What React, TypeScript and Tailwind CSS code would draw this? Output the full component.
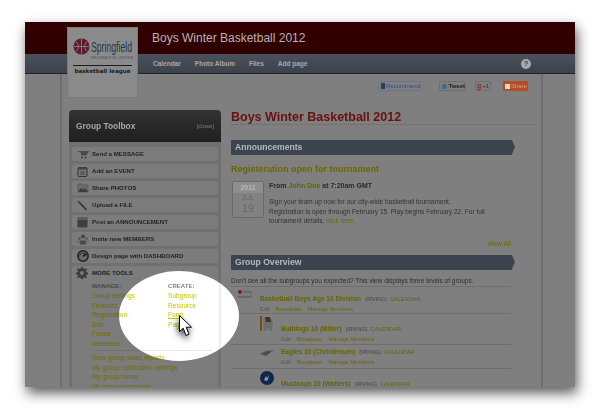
const font = "font-['Liberation_Sans',Arial,sans-serif]";

const toolRows = [
  { label: "Send a ", strong: "MESSAGE", icon: "cart" },
  { label: "Add an ", strong: "EVENT", icon: "calendar" },
  { label: "Share ", strong: "PHOTOS", icon: "folder" },
  { label: "Upload a ", strong: "FILE", icon: "pen" },
  { label: "Post an ", strong: "ANNOUNCEMENT", icon: "book" },
  { label: "Invite new ", strong: "MEMBERS", icon: "people" },
  { label: "Design page with ", strong: "DASHBOARD", icon: "gauge" },
];

const manage = ["Group settings", "Features", "Registration", "Bills", "Forms", "Members"];
const create = ["Subgroup", "Resource", "Form", "Page"];
const extra = ["View group sales reports", "My group notification settings", "My group forms", "My group messages"];

function ToolIcon({ name }: { name: string }) {
  if (name === "cart")
    return (
      <svg width="12" height="10" viewBox="0 0 12 10">
        <path d="M0 2h12L9.5 6.5h-5L3.5 3.5z" fill="#4a4a4a" />
        <circle cx="5" cy="8.5" r="1" fill="#3a3a3a" />
        <circle cx="8.5" cy="8.5" r="1" fill="#3a3a3a" />
      </svg>
    );
  if (name === "calendar")
    return (
      <svg width="11" height="11" viewBox="0 0 11 11">
        <rect x="1" y="1.5" width="9" height="9" rx="1" fill="#777" stroke="#333" />
        <rect x="1" y="1.5" width="9" height="2" fill="#444" />
        <path d="M3 6h5M3 8h5" stroke="#444" strokeWidth="1" />
      </svg>
    );
  if (name === "folder")
    return (
      <svg width="12" height="10" viewBox="0 0 12 10">
        <path d="M1 1h4l1 1h5v7H1z" fill="#6b6b6b" stroke="#4a4a4a" strokeWidth="0.6" />
        <path d="M1 9l3-4 2 2 2-2 3 4z" fill="#3b3b3b" />
      </svg>
    );
  if (name === "pen")
    return (
      <svg width="11" height="11" viewBox="0 0 11 11">
        <path d="M1 1l8.5 9" stroke="#333" strokeWidth="1.8" />
        <path d="M1 1l3 1" stroke="#666" strokeWidth="1" />
      </svg>
    );
  if (name === "book")
    return (
      <svg width="11" height="11" viewBox="0 0 11 11">
        <rect x="0.5" y="0.5" width="10" height="10" rx="1" fill="#3f3f3f" />
        <rect x="0.5" y="0.5" width="10" height="2.5" fill="#5c5c5c" />
      </svg>
    );
  if (name === "people")
    return (
      <svg width="12" height="11" viewBox="0 0 12 11">
        <circle cx="6" cy="2.5" r="2" fill="#444" />
        <circle cx="2.5" cy="4.5" r="1.5" fill="#5a5a5a" />
        <circle cx="9.5" cy="4.5" r="1.5" fill="#5a5a5a" />
        <path d="M3 10.5V6.5h6v4z" fill="#4a4a4a" />
        <path d="M0.5 9V6.5h2V9zM9.5 9V6.5h2V9z" fill="#666" />
      </svg>
    );
  return (
    <svg width="12" height="12" viewBox="0 0 12 12">
      <circle cx="6" cy="6" r="5.2" fill="#6a6a6a" stroke="#1c1c1c" strokeWidth="1.4" />
      <path d="M6 6.5L9 3.5" stroke="#111" strokeWidth="1.2" />
      <path d="M2.5 6.5a3.5 3.5 0 0 1 7 0" fill="none" stroke="#222" strokeWidth="0.8" />
    </svg>
  );
}

function Gear() {
  return (
    <svg width="12" height="12" viewBox="0 0 12 12">
      <path
        d="M5 0h2l.3 1.6 1.2.5L10 1.2 11 2.8 9.9 4l.4 1.2L12 5.5v2l-1.7.3-.4 1.2L11 10l-1.2 1.2-1.3-1-1.2.5L7 12H5l-.3-1.3-1.2-.5-1.3 1L1 10l1.1-1-.4-1.2L0 7.5v-2l1.7-.3L2.1 4 1 2.8 2 1.2l1.5.9 1.2-.5z"
        fill="#3c3c3c"
      />
      <circle cx="6" cy="6" r="2" fill="#777" />
    </svg>
  );
}

// same block is drawn twice: dimmed in the panel, bright inside the spotlight
function MoreTools({ bright }: { bright?: boolean }) {
  const link = bright ? "text-[#c4c400]" : "text-[#6e6e00]";
  const head = bright ? "text-[#808080]" : "text-[#454545]";
  const rule = bright ? "border-[#e6e6e6]" : "border-[#707070]";
  return (
    <div className="w-[146px] pl-[20px] pr-[5px]">
      <div className="h-[13px] text-[6.1px] leading-[13px] font-bold text-[#222]">MORE TOOLS</div>
      <div className="flex">
        <div className="w-[76px]">
          <div className={`h-[12px] pt-[1px] text-[6.1px] leading-[12px] font-bold ${head}`}>MANAGE:</div>
          {manage.map((m) => (
            <div key={m} className={`h-[9.6px] text-[6.6px] leading-[9.6px] ${link}`}>
              {m}
            </div>
          ))}
        </div>
        <div>
          <div className={`h-[12px] pt-[1px] text-[6.1px] leading-[12px] font-bold ${head}`}>CREATE:</div>
          {create.map((c) => (
            <div key={c} className={`h-[9.6px] text-[6.6px] leading-[9.6px] ${link}`}>
              <span className={c === "Form" ? "underline" : ""}>{c}</span>
            </div>
          ))}
        </div>
      </div>
      <div className={`mt-[1.5px] border-t ${rule} pt-[2px]`}>
        {extra.map((e) => (
          <div key={e} className={`h-[9.6px] text-[6.6px] leading-[9.6px] ${link}`}>
            {e}
          </div>
        ))}
      </div>
    </div>
  );
}

function Ribbon({ title }: { title: string }) {
  return (
    <div className="flex h-[15px] w-[284px]">
      <div className="flex-1 rounded-l-[1px] bg-[#3c4450] pl-[4px] text-[8.6px] leading-[15px] font-bold text-[#b4b8bc]">
        {title}
      </div>
      <div className="h-0 w-0 border-y-[7.5px] border-l-[3px] border-y-transparent border-l-[#3c4450]" />
    </div>
  );
}

function GroupRow({
  name,
  image,
  child,
  className,
}: {
  name: string;
  image: React.ReactNode;
  child?: boolean;
  className: string;
}) {
  return (
    <div className={`flex w-[280px] border-b border-[#6e6e6e] ${className}`}>
      <div className={`shrink-0 ${child ? "w-[50px] pl-[29px]" : "w-[29px] pl-[7px]"}`}>{image}</div>
      <div>
        <div className="flex h-[10px] items-center gap-[3px] whitespace-nowrap leading-[10px]">
          <span className="text-[6.55px] font-bold text-[#646400]">{name}</span>
          <span className="ml-[1px] text-[5.4px] text-[#444]">(IRVING)</span>
          <span className="text-[5.6px] text-[#646400]">CALENDAR</span>
        </div>
        <div className="flex h-[10px] gap-[6px] whitespace-nowrap text-[5.7px] leading-[10px] text-[#666610]">
          <span className="text-[#555]">Edit</span>
          <span>Broadcast</span>
          <span>Manage Members</span>
        </div>
      </div>
    </div>
  );
}

export default function App() {
  return (
    <div className={`${font} h-[420px] w-[600px] overflow-hidden bg-white pt-[22px] pl-[25px]`}>
      <div className="relative h-[365px] w-[550px] overflow-hidden bg-[#7f7f7f] shadow-[2px_6px_12px_rgba(0,0,0,0.65)] blur-[0.5px]">
        <div className="flex h-[32px] items-center bg-[#300000] pl-[127px] text-[12px] text-[#b9b4b4]">
          Boys Winter Basketball 2012
        </div>
        <div className="flex h-[20px] items-center gap-[14px] border-b border-[#222] bg-gradient-to-b from-[#4b525d] to-[#3b424c] pl-[128px] text-[6.5px] font-bold text-[#a4a8ac]">
          <span>Calendar</span>
          <span>Photo Album</span>
          <span>Files</span>
          <span>Add page</span>
          <span className="ml-auto mr-[44px] flex h-[10px] w-[10px] items-center justify-center rounded-full bg-[#aaa] text-[8px] text-[#3b424c]">
            ?
          </span>
        </div>

        <div className="flex h-[313px] overflow-hidden">
          <div className="w-[37px] shrink-0 border-r-2 border-[#6e6e6e]" />
          <div className="w-[481px] shrink-0 border-r-2 border-[#6e6e6e]">
            {/* share buttons */}
            <div className="mt-[7px] flex h-[10px] items-center pl-[316px] text-[6px]">
              <div className="flex h-[10px] w-[43px] items-center gap-[1px] rounded-[2px] border border-[#6f7480] bg-[#7c8088] pl-[2px] text-[#3b4a70]">
                <span className="h-[6px] w-[6px] bg-[#2b3a60]" />
                Recommend
              </div>
              <div className="ml-[18px] flex h-[10px] w-[27px] items-center gap-[1px] rounded-[2px] border border-[#6f6f6f] bg-[#7e7e7e] pl-[2px] font-bold text-[#222]">
                <span className="h-[5px] w-[6px] rounded-full bg-[#2d6d96]" />
                Tweet
              </div>
              <div className="ml-[9px] flex h-[10px] w-[16px] items-center gap-[1px] rounded-[2px] border border-[#6f6f6f] bg-[#7e7e7e] pl-[1px] font-bold text-[#444]">
                <span className="text-[7px] text-[#8f2a1c]">g</span>+1
              </div>
              <div className="ml-[12px] flex h-[10px] w-[25px] items-center gap-[1px] rounded-[1px] bg-[#b44c26] pl-[2px] text-[#d9a08a]">
                <span className="h-[5px] w-[5px] bg-[#ddb]" />
                Share
              </div>
            </div>

            <div className="mt-[19px] flex pl-[7px]">
              {/* toolbox */}
              <div className="w-[152px] shrink-0">
                <div className="flex h-[32px] items-center justify-between rounded-t-[4px] bg-gradient-to-b from-[#333] to-[#1f1f1f] px-[7px] text-[#a8a8a8]">
                  <span className="text-[8.4px] font-bold">Group Toolbox</span>
                  <span className="text-[6px] text-[#808080]">[close]</span>
                </div>
                <div className="flex h-[300px] flex-col gap-[3px] bg-[#707070] px-[3px] pt-[5px]">
                  {toolRows.map((r) => (
                    <div key={r.strong} className="flex h-[14px] items-center rounded-[2px] bg-[#7c7c7c] text-[6.1px] font-bold text-[#222]">
                      <div className="flex w-[20px] justify-center pl-[1px]">
                        <ToolIcon name={r.icon} />
                      </div>
                      <span className="whitespace-nowrap text-[#222]">
                        {r.label}
                        {r.strong}
                      </span>
                    </div>
                  ))}
                  <div className="relative rounded-[2px] bg-[#7c7c7c] pb-[10px]">
                    <div className="absolute top-[1px] left-[4px]">
                      <Gear />
                    </div>
                    <MoreTools />
                  </div>
                </div>
              </div>

              {/* main column */}
              <div className="ml-[10px] w-[306px]">
                <div className="h-[15px] border-b border-dotted border-[#666] text-[12.5px] leading-[14px] font-bold text-[#6a1010]">
                  Boys Winter Basketball 2012
                </div>
                <div className="mt-[15px]">
                  <Ribbon title="Announcements" />
                </div>
                <div className="mt-[8px] h-[12px] text-[9px] leading-[12px] font-bold text-[#686800]">
                  Registeration open for tournament
                </div>
                <div className="mt-[6px] flex h-[37px] pl-[1px]">
                  <div className="w-[32px] shrink-0 overflow-hidden rounded-[2px] border border-[#6a6a6a] bg-[#828282] text-center">
                    <div className="h-[11px] bg-[#8e8e8e] text-[7px] leading-[11px] font-bold text-[#b8b8b8]">2011</div>
                    <div className="mt-[1px] text-[7px] leading-[8px] text-[#666]">JUL</div>
                    <div className="text-[11px] leading-[13px] text-[#666]">19</div>
                  </div>
                  <div className="ml-[5px] text-[#333]">
                    <div className="h-[10px] text-[7px] leading-[10px] font-bold text-[#2a2a2a]">
                      From <span className="text-[#646400]">John Doe</span> at 7:20am GMT
                    </div>
                    <div className="mt-[6px] text-[6.5px] leading-[9.7px] whitespace-nowrap">
                      Sign your team up now for our city-wide basketball tournament.
                      <br />
                      Registration is open through February 15. Play begins February 22. For full
                      <br />
                      tournament details, <span className="text-[#5f6a14]">click here.</span>
                    </div>
                  </div>
                </div>
                <div className="mt-[21px] h-[10px] w-[280px] text-right text-[6.8px] leading-[10px] text-[#666600]">
                  View All
                </div>
                <div className="mt-[6px]">
                  <Ribbon title="Group Overview" />
                </div>
                <div className="mt-[6px] h-[11px] w-[280px] border-b border-[#6e6e6e] text-[6.5px] leading-[10px] whitespace-nowrap text-[#2e2e2e]">
                  Don't see all the subgroups you expected? This view displays three levels of groups.
                </div>
                <GroupRow
                  name="Basketball Boys Age 10 Division"
                  className="h-[27px] pt-[7px]"
                  image={
                    <div className="-mt-[4px] flex flex-col text-[3px] leading-[4px] text-[#3c4a58]">
                      <div className="flex items-center gap-[1px]">
                        <span className="h-[4px] w-[4px] rounded-full bg-[#7a1a30]" />
                        <span>Spring</span>
                      </div>
                      <span className="mt-[1px] text-[#444]">basketball</span>
                    </div>
                  }
                />
                <GroupRow
                  child
                  name="Bulldogs 10 (Miller)"
                  className="h-[31px] pt-[10px]"
                  image={
                    <svg width="14" height="16" viewBox="0 0 14 16" className="-mt-[8px]">
                      <rect x="0" y="0" width="2" height="15" fill="#7a4a10" />
                      <path d="M3 2h8l2 6-1 7H9l-1-4-2 4H4z" fill="#6c6c6c" />
                      <path d="M5 1h5l1 5H6z" fill="#3c3530" />
                    </svg>
                  }
                />
                <GroupRow
                  child
                  name="Eagles 10 (Christensen)"
                  className="h-[24px] pt-[2px]"
                  image={
                    <svg width="14" height="8" viewBox="0 0 14 8" className="mt-[2px]">
                      <path d="M0 5l6-3 8-1-4 3-4 3z" fill="#4a4f55" />
                      <path d="M9 2l5-1-3 2z" fill="#7a6a30" />
                    </svg>
                  }
                />
                <div className="flex h-[40px] w-[280px]">
                  <div className="w-[50px] shrink-0 pt-[2px] pl-[29px]">
                    <svg width="14" height="14" viewBox="0 0 14 14">
                      <circle cx="7" cy="7" r="7" fill="#10294a" />
                      <path d="M4 9l2-4 1 2 2-3-1 5-2 1z" fill="#8a94a2" />
                    </svg>
                  </div>
                  <div className="mt-[10px] flex h-[10px] items-center gap-[3px] whitespace-nowrap">
                    <span className="text-[6.55px] font-bold text-[#646400]">Mustangs 10 (Watters)</span>
                    <span className="ml-[1px] text-[5.4px] text-[#444]">(IRVING)</span>
                    <span className="text-[5.6px] text-[#646400]">CALENDAR</span>
                  </div>
                </div>
              </div>
            </div>
          </div>
        </div>

        {/* logo sits over the header bars */}
        <div className="absolute top-[5px] left-[42px] h-[71px] w-[71px] border border-[#7a7a7a] bg-[#8b8b8b] px-[5px] pt-[10px]">
          <div className="flex items-start gap-[1px]">
            <svg width="17" height="17" viewBox="0 0 17 17" className="shrink-0">
              <circle cx="8.5" cy="8.5" r="8" fill="#5f1a2c" />
              <path d="M1 8.5h15M8.5 1v15M3 3.5q5 5 0 10M14 3.5q-5 5 0 10" fill="none" stroke="#8b8b8b" strokeWidth="0.8" />
            </svg>
            <span className="origin-left scale-x-[0.56] text-[15.5px] leading-[17px] whitespace-nowrap text-[#22384a]">
              Springfield
            </span>
          </div>
          <div className="mt-[1px] ml-[18px] text-[3.6px] leading-[5px] tracking-[0.2px] whitespace-nowrap text-[#3f4f5c]">
            RECREATION CENTER
          </div>
          <div className="mt-[4px] border-t border-[#1c1c1c] pt-[1px] text-center font-['DejaVu_Sans',sans-serif] text-[5.6px] leading-[9px] font-bold whitespace-nowrap text-[#1c1c1c]">
            basketball league
          </div>
        </div>

        {/* spotlight */}
        <div className="absolute top-[249px] left-[94px] h-[90px] w-[120px] overflow-hidden rounded-[50%] bg-white">
          <div className="absolute top-0 left-[100px] h-full w-[2px] bg-[#ececec]" />
          <div className="absolute -top-[5px] -left-[47px]">
            <MoreTools bright />
          </div>
        </div>

        {/* cursor */}
        <svg
          width="14"
          height="23"
          viewBox="0 0 14 23"
          className="absolute top-[293px] left-[154px] drop-shadow-[-1px_3px_3px_rgba(0,0,0,0.75)]"
        >
          <path d="M0.5 0.5V16.5L4.2 13.2L7 20.5L10 19.2L7.2 12.2H12.5Z" fill="#fff" stroke="#000" strokeWidth="1" />
        </svg>
      </div>
    </div>
  );
}
